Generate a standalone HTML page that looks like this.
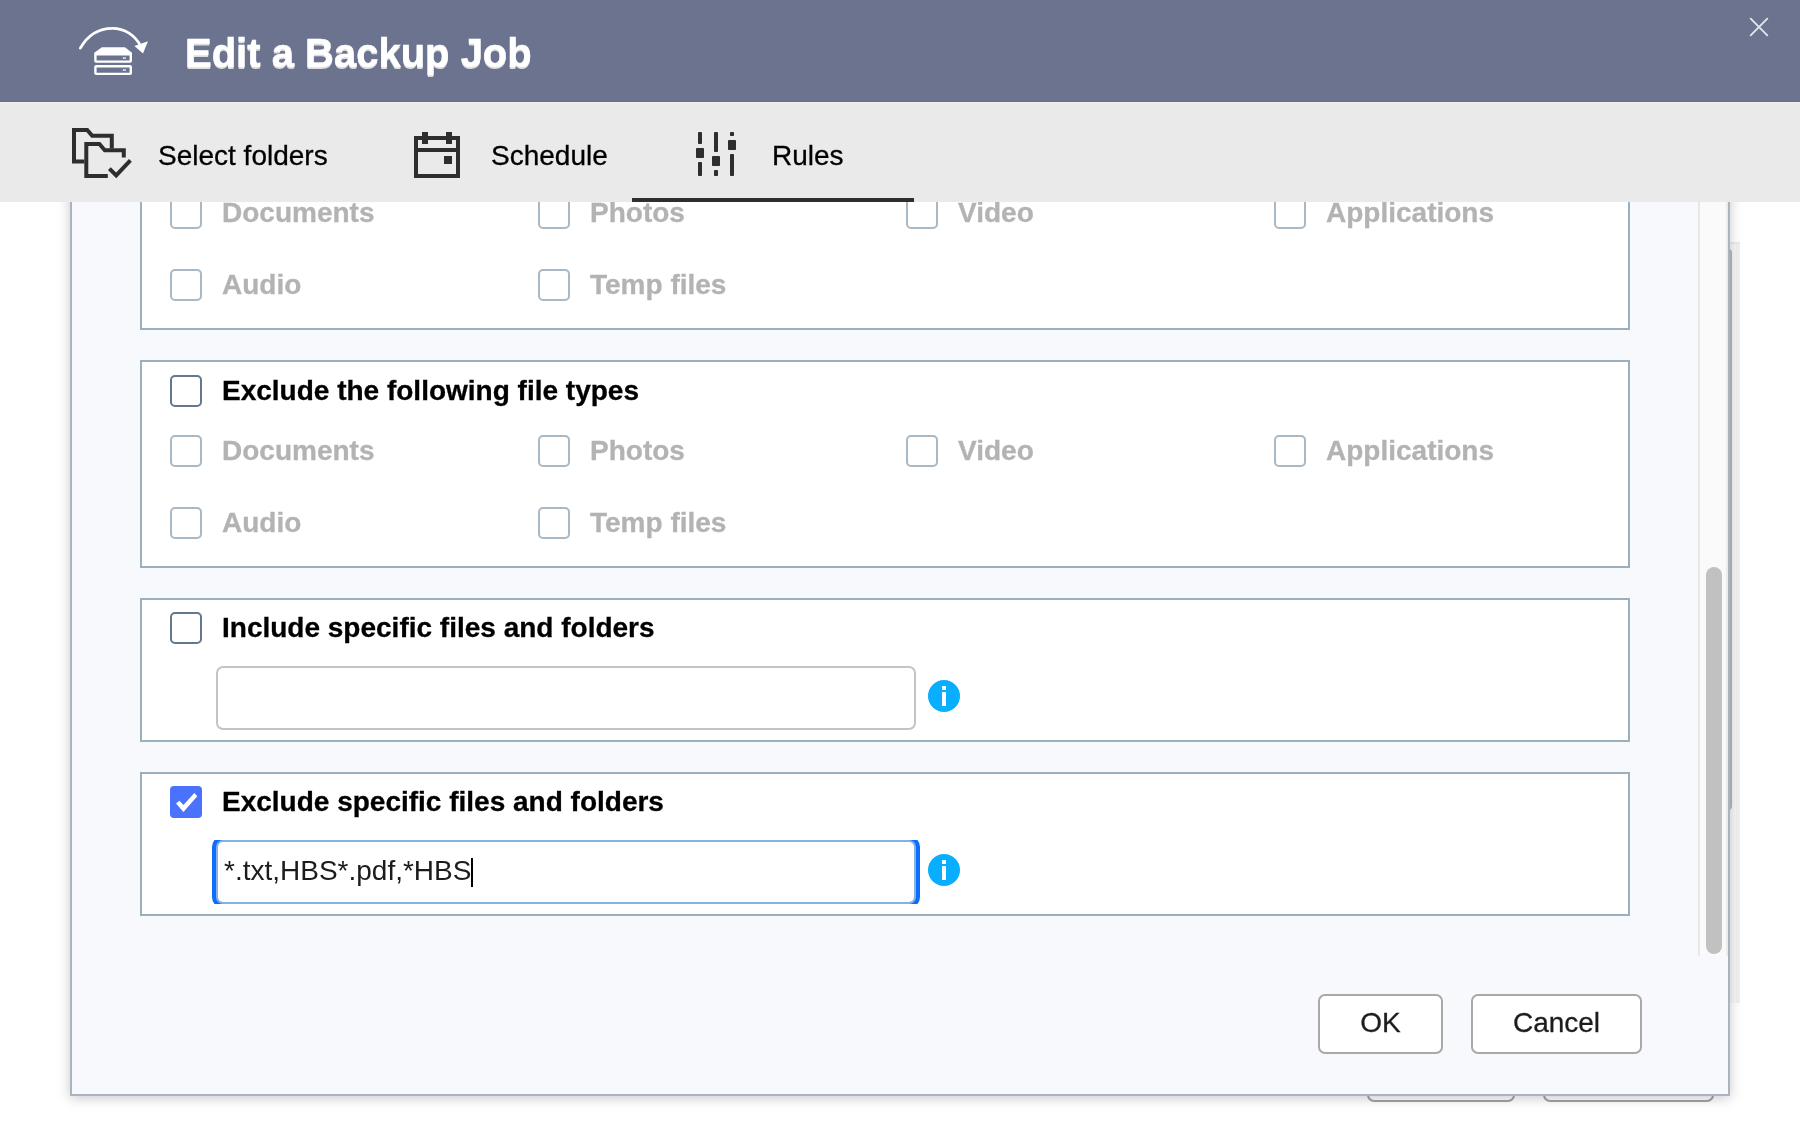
<!DOCTYPE html>
<html lang="en">
<head>
<meta charset="utf-8">
<title>Edit a Backup Job</title>
<style>
*{box-sizing:border-box;margin:0;padding:0}
html,body{width:1800px;height:1130px;overflow:hidden;background:#fff}
body{position:relative;font-family:"Liberation Sans",Arial,Helvetica,sans-serif;color:#000}
.abs{position:absolute}
/* background page items peeking from behind the dialog */
#bgtrack{left:1730px;top:242px;width:10px;height:761px;background:#f1f1f1;border-top:2px solid #ececec}
#bgtrack i{position:absolute;left:0;top:0;width:6px;height:100%;background:#f8f8f8}
#bgthumb{left:1722px;top:248px;width:10px;height:563px;border-radius:5px;background:#b9b9b9}
.bgbtn{top:1040px;height:62px;border:2px solid #a3a3a3;border-radius:7px;background:#fff}
/* dialog */
#dlg{left:70px;top:0;width:1660px;height:1096px;background:#f8f9fd;border:2px solid #abb2c0;box-shadow:0 2px 12px rgba(0,0,0,.22)}
#hdr{left:0;top:0;width:1800px;height:102px;background:#6b738f;border-bottom:1px solid #636b89}
#title{left:185px;top:30px;font-size:40px;line-height:46px;font-weight:bold;color:#fff;-webkit-text-stroke:.5px #fff;text-shadow:0 2px 0 #dcdcdc;white-space:nowrap}
#tabs{left:0;top:102px;width:1800px;height:100px;background:#eaeaea;border-top:1px solid #f2f2f0}
.tab{font-size:28px;line-height:32px;white-space:nowrap;color:#000;-webkit-text-stroke:.3px #000}
#uline{left:632px;top:198px;width:282px;height:4px;background:#2e2e2e}
/* scroll area */
#scroll{left:72px;top:202px;width:1626px;height:754px;overflow:hidden}
.box{position:absolute;left:68px;width:1490px;background:#fff;border:2px solid #9bafbd}
.cb{position:absolute;width:32px;height:32px;border:2px solid #63788c;border-radius:5px;background:#fff}
.cb.dis{border-color:#a9b8c6}
.cb.on{border:none;background:#4a72fd;border-radius:4px}
.lbl{position:absolute;font-size:28px;line-height:32px;font-weight:bold;white-space:nowrap;color:#000;-webkit-text-stroke:.3px currentColor}
.lbl.dis{color:#b3b3b3}
.inp{position:absolute;left:74px;width:700px;height:64px;border:2px solid #c4c4c4;border-radius:7px;background:#fff;font-size:28px;line-height:57px;padding-left:6px;color:#1c1c1c;white-space:nowrap}
.info{position:absolute;width:32px;height:32px}
.focuswrap{position:absolute;left:70px;width:708px;height:64px;overflow:hidden}
.inp.foc{left:4px;top:0;border-color:#85b2e3;box-shadow:0 0 0 4px #0b6efd}
.caret{position:absolute;left:253px;top:16px;width:2px;height:29px;background:#000}
#track{left:1698px;top:202px;width:30px;height:754px;background:#fafafa;border-left:2px solid #e8e8e8;border-right:2px solid #ececec}
#thumb{left:1706px;top:567px;width:16px;height:387px;border-radius:8px;background:#c1c1c1}
.btn{position:absolute;top:994px;height:60px;border:2px solid #a9a9a9;border-radius:7px;background:#fff;font-size:28px;line-height:54px;text-align:center;color:#1c1c1c;-webkit-text-stroke:.3px #1c1c1c}
</style>
</head>
<body><div id="root" style="position:absolute;left:0;top:0;width:1800px;height:1130px;will-change:transform">
<!-- things behind the dialog -->
<div class="abs" id="bgtrack"><i></i></div>
<div class="abs" id="bgthumb"></div>
<div class="abs bgbtn" style="left:1367px;width:148px"></div>
<div class="abs bgbtn" style="left:1543px;width:171px"></div>

<div class="abs" id="dlg"></div>

<!-- scrolling content -->
<div class="abs" id="scroll">
  <div class="box" style="top:-80px;height:208px">
    <div class="cb dis" style="left:28px;top:73px"></div><div class="lbl dis" style="left:80px;top:73px">Documents</div>
    <div class="cb dis" style="left:396px;top:73px"></div><div class="lbl dis" style="left:448px;top:73px">Photos</div>
    <div class="cb dis" style="left:764px;top:73px"></div><div class="lbl dis" style="left:816px;top:73px">Video</div>
    <div class="cb dis" style="left:1132px;top:73px"></div><div class="lbl dis" style="left:1184px;top:73px">Applications</div>
    <div class="cb dis" style="left:28px;top:145px"></div><div class="lbl dis" style="left:80px;top:145px">Audio</div>
    <div class="cb dis" style="left:396px;top:145px"></div><div class="lbl dis" style="left:448px;top:145px">Temp files</div>
  </div>
  <div class="box" style="top:158px;height:208px">
    <div class="cb" style="left:28px;top:13px"></div><div class="lbl" style="left:80px;top:13px">Exclude the following file types</div>
    <div class="cb dis" style="left:28px;top:73px"></div><div class="lbl dis" style="left:80px;top:73px">Documents</div>
    <div class="cb dis" style="left:396px;top:73px"></div><div class="lbl dis" style="left:448px;top:73px">Photos</div>
    <div class="cb dis" style="left:764px;top:73px"></div><div class="lbl dis" style="left:816px;top:73px">Video</div>
    <div class="cb dis" style="left:1132px;top:73px"></div><div class="lbl dis" style="left:1184px;top:73px">Applications</div>
    <div class="cb dis" style="left:28px;top:145px"></div><div class="lbl dis" style="left:80px;top:145px">Audio</div>
    <div class="cb dis" style="left:396px;top:145px"></div><div class="lbl dis" style="left:448px;top:145px">Temp files</div>
  </div>
  <div class="box" style="top:396px;height:144px">
    <div class="cb" style="left:28px;top:12px"></div><div class="lbl" style="left:80px;top:12px">Include specific files and folders</div>
    <div class="inp" style="top:66px"></div>
    <svg class="info" style="left:786px;top:80px" viewBox="0 0 32 32"><circle cx="16" cy="16" r="16" fill="#09aeff"/><rect x="14" y="6" width="4" height="4" rx=".6" fill="#fff"/><rect x="14" y="12" width="4" height="14" rx=".6" fill="#fff"/></svg>
  </div>
  <div class="box" style="top:570px;height:144px">
    <svg class="cb on" style="left:28px;top:12px" viewBox="0 0 32 32"><polygon points="6,17.5 9.4,14.7 13.45,19 24.3,6.9 27.3,10.3 13.45,26" fill="#fff"/></svg><div class="lbl" style="left:80px;top:12px">Exclude specific files and folders</div>
    <div class="focuswrap" style="top:66px"><div class="inp foc"><span>*.txt,HBS*.pdf,*HBS</span><i class="caret"></i></div></div>
    <svg class="info" style="left:786px;top:80px" viewBox="0 0 32 32"><circle cx="16" cy="16" r="16" fill="#09aeff"/><rect x="14" y="6" width="4" height="4" rx=".6" fill="#fff"/><rect x="14" y="12" width="4" height="14" rx=".6" fill="#fff"/></svg>
  </div>
</div>

<div class="abs" id="track"></div>
<div class="abs" id="thumb"></div>

<div class="btn" style="left:1318px;width:125px">OK</div>
<div class="btn" style="left:1471px;width:171px">Cancel</div>

<!-- header -->
<div class="abs" id="hdr"></div>
<div class="abs" id="title">Edit a Backup Job</div>

<!-- tabs -->
<div class="abs" id="tabs"></div>
<div class="abs tab" style="left:158px;top:140px">Select folders</div>
<div class="abs tab" style="left:491px;top:140px">Schedule</div>
<div class="abs tab" style="left:772px;top:140px">Rules</div>
<div class="abs" id="uline"></div>
<!-- header icon -->
<svg class="abs" style="left:70px;top:15px" width="90" height="75" viewBox="70 15 90 75">
  <path d="M80.3 48.2 C 88 34.5, 100 28.3, 112.5 28.3 C 124.5 28.3, 135 35, 141 46.5" fill="none" stroke="#fff" stroke-width="2.7" stroke-linecap="round"/>
  <polygon points="134.4,46 148,41.2 143,53.4" fill="#fff"/>
  <path d="M101.9 47.2 H125 L132 52.8 V60.8 Q132 62.8 130 62.8 H96.2 Q94.2 62.8 94.2 60.8 V52.8 Z M96.6 55.6 V60.4 H129.6 V55.6 Z" fill="#fff" fill-rule="evenodd"/>
  <path d="M96.2 65.1 H130 Q132 65.1 132 67.1 V73 Q132 75 130 75 H96.2 Q94.2 75 94.2 73 V67.1 Q94.2 65.1 96.2 65.1 Z M96.6 67.5 V72.7 H129.6 V67.5 Z" fill="#fff" fill-rule="evenodd"/>
  <rect x="122.8" y="57.3" width="3.2" height="1.5" fill="#e4e6ee"/>
  <rect x="122.8" y="69.3" width="3.2" height="1.5" fill="#e4e6ee"/>
</svg>
<!-- close -->
<svg class="abs" style="left:1739px;top:7px" width="40" height="40" viewBox="1739 7 40 40">
  <path d="M1750.7 18.7 L1767.3 35.3 M1767.3 18.7 L1750.7 35.3" stroke="#e2e5ed" stroke-width="1.9" stroke-linecap="round" fill="none"/>
</svg>
<!-- tab icons -->
<svg class="abs" style="left:68px;top:124px" width="68" height="58" viewBox="68 124 68 58">
  <g fill="none" stroke="#2e2e2e" stroke-width="4" stroke-linejoin="miter">
    <path d="M84.4 161.6 H74 V130 H87.2 L92.2 135.8 H111.8 V148.4"/>
    <path d="M107.8 176 H86.3 V144 H99.4 L104.8 150.2 H123.8 V157.6"/>
    <path d="M109.4 168.6 L116.2 175.4 L130.4 160.4"/>
  </g>
</svg>
<svg class="abs" style="left:410px;top:128px" width="54" height="54" viewBox="410 128 54 54">
  <g fill="#2e2e2e">
    <path d="M414 136 H460 V178 H414 Z M418 140 V148 H456 V140 Z M418 152 V174 H456 V152 Z" fill-rule="evenodd"/>
    <rect x="422" y="132" width="6" height="12"/>
    <rect x="446" y="132" width="6" height="12"/>
    <rect x="444" y="156" width="8" height="8"/>
  </g>
</svg>
<svg class="abs" style="left:692px;top:128px" width="48" height="52" viewBox="692 128 48 52">
  <g fill="#2e2e2e">
    <rect x="698" y="132" width="4" height="12" rx=".8"/><rect x="696" y="148" width="8" height="10" rx=".8"/><rect x="698" y="162" width="4" height="14" rx=".8"/>
    <rect x="714" y="132" width="4" height="20" rx=".8"/><rect x="712" y="156" width="8" height="10" rx=".8"/><rect x="714" y="170" width="4" height="6" rx=".8"/>
    <rect x="730" y="132" width="4" height="4" rx=".8"/><rect x="728" y="140" width="8" height="10" rx=".8"/><rect x="730" y="154" width="4" height="22" rx=".8"/>
  </g>
</svg>

</div></body>
</html>
